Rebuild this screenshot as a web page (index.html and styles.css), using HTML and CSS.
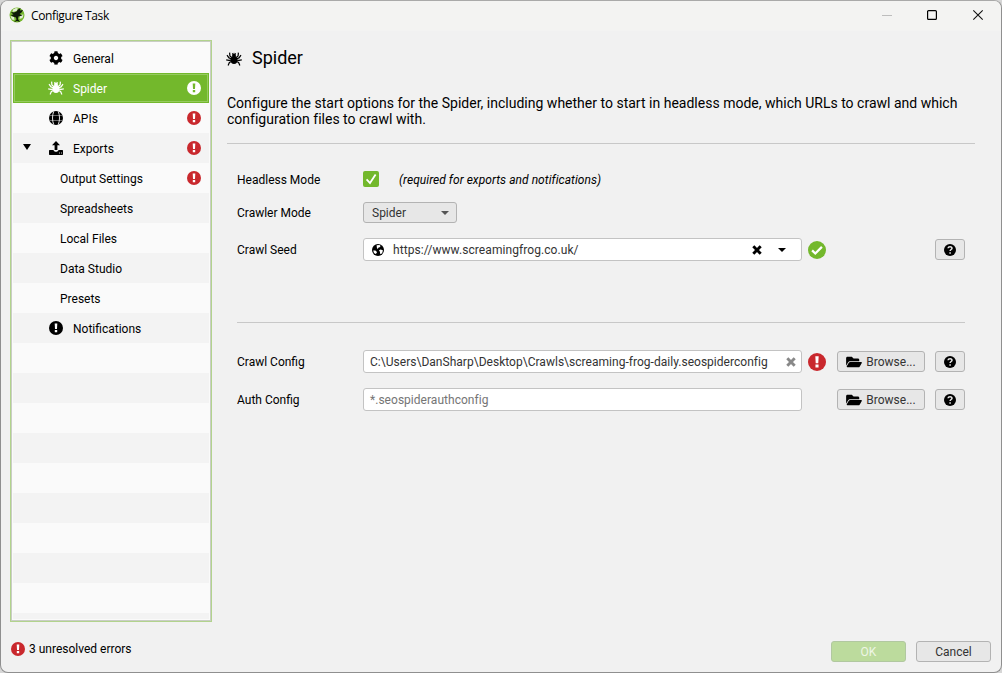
FILE: index.html
```html
<!DOCTYPE html>
<html lang="en">
<head>
<meta charset="utf-8">
<title>Configure Task</title>
<link rel="stylesheet" href="styles.css">
</head>
<body>
<svg class="defs" aria-hidden="true">
  <symbol id="cog" viewBox="0 0 512 512"><path d="M487.4 315.7l-42.6-24.6c4.3-23.2 4.3-47 0-70.2l42.6-24.6c4.9-2.8 7.1-8.6 5.5-14-11.1-35.6-30-67.8-54.7-94.6-3.8-4.1-10-5.1-14.8-2.3L380.8 110c-17.9-15.4-38.5-27.3-60.8-35.1V25.8c0-5.6-3.9-10.5-9.4-11.7-36.7-8.2-74.3-7.8-109.2 0-5.5 1.2-9.4 6.1-9.4 11.7V75c-22.2 7.9-42.8 19.8-60.8 35.1L88.7 85.5c-4.9-2.8-11-1.9-14.8 2.3-24.7 26.7-43.6 58.9-54.7 94.6-1.7 5.4.6 11.2 5.5 14L67.3 221c-4.3 23.2-4.3 47 0 70.2l-42.6 24.6c-4.9 2.8-7.1 8.6-5.5 14 11.1 35.6 30 67.8 54.7 94.6 3.8 4.1 10 5.1 14.8 2.3l42.6-24.6c17.9 15.4 38.5 27.3 60.8 35.1v49.2c0 5.6 3.9 10.5 9.4 11.7 36.7 8.2 74.3 7.8 109.2 0 5.500-1.200 9.400-6.100 9.400-11.700v-49.200c22.200-7.900 42.800-19.800 60.800-35.100l42.600 24.600c4.900 2.800 11 1.900 14.800-2.300 24.700-26.700 43.600-58.900 54.700-94.600 1.500-5.500-.7-11.300-5.600-14.100zM256 336c-44.100 0-80-35.900-80-80s35.900-80 80-80 80 35.900 80 80-35.900 80-80 80z"/></symbol>
  <symbol id="spider" viewBox="0 0 16 14"><ellipse cx="8" cy="8" rx="3.400" ry="3.900"/><circle cx="8" cy="3.700" r="1.900"/><path d="M7.200 3 6.700 1M8.800 3 9.300 1M6 5.600 3.900 3.900 3.600.6M10 5.600l2.100-1.700.3-3.300M6 7 3 5.900 1 3.200M10 7l3-1.100 2-2.700M6 8.100 3 8.300.2 7.900M10 8.100l3 .2 2.800-.4M6 9.300 3.400 10.500l-1.300 3M10 9.300l2.600 1.200 1.300 3" fill="none" stroke="currentColor" stroke-width="1.200"/></symbol>
  <symbol id="globe" viewBox="0 0 14 14"><circle cx="7" cy="7" r="7"/><path d="M4.700.4C3.100 4.600 3.100 9.400 4.700 13.600M9.300.4c1.600 4.200 1.600 9 0 13.200" fill="none" stroke="#f9f9f9" stroke-width=".9"/><path d="M.6 4.500h12.800M.6 9.500h12.800" stroke="#f9f9f9" stroke-width=".4"/></symbol>
  <symbol id="earth" viewBox="0 0 12 12"><circle cx="6" cy="6" r="6"/><path d="M4.600 1.200 7.500 1.100 8.600 2 7.700 3.200 6.600 3.500 5.800 4.700 5 4.400zM1.200 6.400 3.400 6.600 5 7.900 4.500 9.200 3.300 9.900 1.900 8.700zM7 6.200 8.600 5.400 10.900 6.300 10.400 8.500 9 10.200 8 9.600 8 8z" fill="#fff"/></symbol>
  <symbol id="upload" viewBox="0 0 14 14"><path d="M7 0l4 4.200H8.400V9H5.600V4.200H3zM.7 9h3.800c.2 1.200 1.200 1.800 2.500 1.800S9.300 10.200 9.500 9h3.800q.7 0 .7.700v3.600q0 .7-.7.700H.7q-.7 0-.7-.7V9.700Q0 9 .7 9z"/><path d="M10 12h1M12 12h1" stroke="#f4f4f4" stroke-width=".8"/></symbol>
  <symbol id="warn" viewBox="0 0 14 14"><circle cx="7" cy="7" r="7"/><path class="mark" d="M5.700 2.600h2.600L8 8H6zM5.800 9h2.400v2.200H5.800z"/></symbol>
  <symbol id="ok" viewBox="0 0 18 18"><circle cx="9" cy="9" r="9"/><path d="M4.100 9.400 7.300 12.500 13.900 5.900" fill="none" stroke="#fff" stroke-width="2.300"/></symbol>
  <symbol id="help" viewBox="0 0 12 12"><circle cx="6" cy="6" r="6"/><path d="M4 4.300C4.200 2.200 8 2.100 8 4.300 8 5.500 6.100 5.600 6.100 7.100M6.100 8.200v1.500" fill="none" stroke="#e9e9e9" stroke-width="1.500"/></symbol>
  <symbol id="folder" viewBox="0 0 576 512"><path d="M572.700 292.100 500.300 416.200A64 64 0 0 1 445 448H45c-18.500 0-30-20.100-20.700-36.100l72.400-124.200A64 64 0 0 1 152 256h400c18.500 0 30 20.100 20.700 36.100zM152 224h328v-48c0-26.500-21.500-48-48-48H272l-64-64H48C21.500 64 0 85.500 0 112v278l69.100-118.400C86.200 242.200 118 224 152 224z"/></symbol>
  <symbol id="cross" viewBox="0 0 10 10"><path d="M1.300 1.300 8.700 8.700M8.700 1.300 1.300 8.700" stroke="currentColor" stroke-width="2.900"/></symbol>
  <symbol id="down" viewBox="0 0 8 4" preserveAspectRatio="none"><path d="M0 0h8L4 4z"/></symbol>
</svg>
<div class="window">
  <header class="titlebar">
    <svg class="logo" viewBox="0 0 16 16"><circle cx="8" cy="8" r="7.500" fill="#76b72e"/><path d="M4 2.500 7 1 9 1.500 7.500 4 3.500 5zM1.500 9 5 10 5.500 13 3 12.500zM11 8 14.500 7.500 13.500 11 10.500 12z" fill="#e3eed6"/><path d="M1.800 5 5 5.500 7.500 4.500 9 2.500 11.500 1 11 3.500 14 3 12.500 5.500 10.500 7 13.500 8.500 9.500 9.500 9 12 11 15 8 14 5 15.200 7.500 12.500 7 10.500 4 9.500 1.500 8 4.500 7.500z" fill="#0d1a08"/></svg>
    <span class="caption">Configure Task</span>
    <svg class="controls" viewBox="0 0 104 12"><path d="M0 6.500h10" stroke="#bdbdbd"/><rect x="45.600" y="1.600" width="8.800" height="8.800" rx="1" fill="none" stroke="#000" stroke-width="1.200"/><path d="M91.300 1.300l9.400 9.400M100.700 1.300l-9.400 9.400" stroke="#111" stroke-width="1.100"/></svg>
  </header>
  <div class="body">
    <nav class="tree">
      <div class="item"><svg class="icon"><use href="#cog"/></svg><span>General</span></div>
      <div class="item selected"><svg class="icon spider"><use href="#spider"/></svg><span>Spider</span><svg class="state"><use href="#warn"/></svg></div>
      <div class="item"><svg class="icon"><use href="#globe"/></svg><span>APIs</span><svg class="state"><use href="#warn"/></svg></div>
      <div class="item parent"><svg class="expander"><use href="#down"/></svg><svg class="icon"><use href="#upload"/></svg><span>Exports</span><svg class="state"><use href="#warn"/></svg></div>
      <div class="item child"><span>Output Settings</span><svg class="state"><use href="#warn"/></svg></div>
      <div class="item child"><span>Spreadsheets</span></div>
      <div class="item child"><span>Local Files</span></div>
      <div class="item child"><span>Data Studio</span></div>
      <div class="item child"><span>Presets</span></div>
      <div class="item"><svg class="icon"><use href="#warn"/></svg><span>Notifications</span></div>
    </nav>
    <main class="panel">
      <h1 class="heading"><svg class="heading-icon"><use href="#spider"/></svg><span>Spider</span></h1>
      <p class="intro">Configure the start options for the Spider, including whether to start in headless mode, which URLs to crawl and which<br>configuration files to crawl with.</p>
      <section class="group">
        <div class="row row-check"><label class="label">Headless Mode</label><svg class="checkbox" viewBox="0 0 16 16"><rect width="16" height="16" rx="2" fill="#73b82c"/><path d="M3.600 8.300 7 12 12.600 3.600" fill="none" stroke="#fff" stroke-width="1.800"/></svg><em class="note">(required for exports and notifications)</em></div>
        <div class="row row-select"><label class="label">Crawler Mode</label><div class="select"><span>Spider</span><svg class="caret"><use href="#down"/></svg></div></div>
        <div class="row"><label class="label">Crawl Seed</label><div class="field seed"><svg class="small"><use href="#earth"/></svg><span class="value url">https://www.screamingfrog.co.uk/</span><svg class="clear"><use href="#cross"/></svg><svg class="caret black"><use href="#down"/></svg></div><svg class="result valid"><use href="#ok"/></svg><button class="button help"><svg class="small"><use href="#help"/></svg></button></div>
      </section>
      <section class="group config">
        <div class="row"><label class="label">Crawl Config</label><div class="field"><span class="value path">C:\Users\DanSharp\Desktop\Crawls\screaming-frog-daily.seospiderconfig</span><svg class="clear gray"><use href="#cross"/></svg></div><svg class="result error"><use href="#warn"/></svg><button class="button browse"><svg class="folder"><use href="#folder"/></svg><span>Browse...</span></button><button class="button help"><svg class="small"><use href="#help"/></svg></button></div>
        <div class="row"><label class="label">Auth Config</label><div class="field"><span class="placeholder">*.seospiderauthconfig</span></div><button class="button browse"><svg class="folder"><use href="#folder"/></svg><span>Browse...</span></button><button class="button help"><svg class="small"><use href="#help"/></svg></button></div>
      </section>
    </main>
  </div>
  <footer class="footer">
    <div class="errors"><svg class="state"><use href="#warn"/></svg><span>3 unresolved errors</span></div>
    <div class="actions"><button class="button action primary" disabled>OK</button><button class="button action">Cancel</button></div>
  </footer>
</div>
</body>
</html>
```
FILE: styles.css
```css
* { box-sizing: border-box; }
body { margin: 0; background: #d6d6d6; font: 12px/16px Roboto, "Liberation Sans", sans-serif; color: #000; }
svg { display: block; flex: none; fill: currentColor; }
.defs { position: absolute; width: 0; height: 0; }
.mark { fill: var(--mark, #fff); }
.window { display: flex; flex-direction: column; width: 1002px; height: 673px; border: 1px solid #8f8f8f; border-top-color: #a9a9a9; border-radius: 8px; background: #f1f1f1; overflow: hidden; }

.titlebar { display: flex; align-items: center; height: 30px; padding: 0 15px 2px 8px; background: #f3f3f2; flex: none; }
.logo { width: 16px; height: 16px; }
.caption { margin: 2px 0 0 6px; font: 12px/16px "Open Sans", sans-serif; letter-spacing: -.38px; }
.controls { width: 104px; height: 12px; margin-left: auto; margin-top: -1px; }

.body { display: flex; height: 591px; flex: none; padding: 9px 26px 0 9px; }
.tree { width: 202px; height: 582px; border: 1px solid #b2d38d; box-shadow: inset 0 0 0 1px #c9cdc5; padding: 2px; background: #fafafa; flex: none; position: relative; }
.tree::before { content: ""; position: absolute; inset: 2px; background: repeating-linear-gradient(#fafafa 0 30px, #f3f3f3 30px 60px); }
.item { position: relative; display: flex; align-items: center; height: 30px; padding: 0 8px 0 36px; }
.item span { padding-top: 1px; }
.icon { width: 14px; height: 14px; margin-right: 10px; }
.icon.spider { width: 16px; margin: 0 9px 0 -1px; }
.selected { background: #73b82c; color: #fff; box-shadow: inset 0 0 0 1px #73b82c, inset 0 0 0 2px #96cb5f; }
.state { width: 14px; height: 14px; color: #c9282d; margin-left: auto; }
.selected .state { color: #fff; --mark: #73b82c; }
.child { padding-left: 47px; }
.parent { padding-left: 10px; }
.expander { width: 8px; height: 6px; margin: -3px 18px 0 0; }

.panel { flex: 1; padding-left: 15px; }
.heading { display: flex; align-items: center; height: 22px; margin: 7px 0 0; font-size: 18px; font-weight: 400; }
.heading-icon { width: 16px; height: 14px; margin: 1px 10px 0 -1px; }
.intro { height: 49px; margin: 26px 0 0; border-bottom: 1px solid #c8c8c8; font-size: 14px; line-height: 16px; letter-spacing: .008px; white-space: nowrap; }
.group { margin: 0 10px; padding-top: 24px; }
.config { margin-top: 61px; border-top: 1px solid #c8c8c8; padding-top: 27px; }
.row { display: flex; align-items: center; height: 23px; margin-bottom: 15px; }
.row-check { margin-bottom: 10px; }
.row-select { margin-bottom: 14px; }
.label { width: 126px; flex: none; }
.checkbox { width: 16px; height: 16px; margin-bottom: 1px; }
.note { margin-left: 20px; letter-spacing: .05px; }
.select { display: flex; align-items: center; justify-content: space-between; width: 94px; height: 21px; padding: 0 7px 0 8px; border: 1px solid #b3b3b3; border-radius: 3px; background: #e7e7e7; color: #333; }
.caret { width: 8px; height: 4px; color: #555; }
.caret.black { color: #000; margin: 0 15px 0 16px; }
.field { display: flex; align-items: center; width: 439px; height: 23px; padding-left: 6px; border: 1px solid #c3c3c3; border-radius: 3px; background: #fff; color: #333; flex: none; }
.seed { padding-left: 8px; color: #000; }
.small { width: 12px; height: 12px; }
.url { margin-left: 9px; color: #333; letter-spacing: .07px; }
.path { letter-spacing: .025px; }
.placeholder { color: #757575; letter-spacing: .03px; }
.clear { width: 10px; height: 10px; margin-left: auto; }
.gray { color: #888; margin-right: 5px; }
.result { width: 18px; height: 18px; margin: 0 .5px 0 5.500px; }
.valid { color: #73b82c; }
.error { color: #c9282d; }
.button { display: flex; align-items: center; justify-content: center; height: 21px; padding: 0; border: 1px solid #b3b3b3; border-radius: 3px; background: #e7e7e7; color: #333; font: 12px/16px Roboto, sans-serif; }
.help { width: 30px; color: #000; margin-left: auto; }
.browse { width: 88px; margin-left: 11px; }
.field + .browse { margin-left: 35px; }
.folder { width: 16px; height: 14px; color: #000; margin-right: 4px; }

.footer { display: flex; justify-content: space-between; padding: 19px 10px 0; }
.errors { display: flex; align-items: center; height: 16px; gap: 4px; }
.actions { display: flex; gap: 10px; }
.action { width: 75px; }
.primary { background: #bcdb9d; border-color: #b1c8a0; color: #eef6e5; }
```
